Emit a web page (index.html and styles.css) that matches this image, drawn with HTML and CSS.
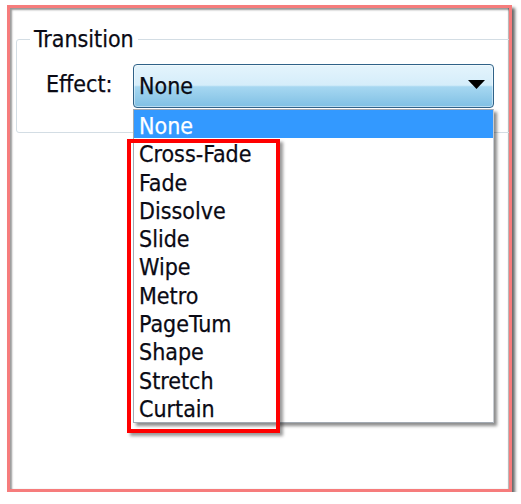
FILE: index.html
```html
<!DOCTYPE html>
<html lang="en">
<head>
<meta charset="utf-8">
<title>Transition</title>
<link rel="stylesheet" href="styles.css">
</head>
<body>
<div class="frame">
  <fieldset class="group">
    <legend class="group-title">Transition</legend>
    <div class="effect-row">
      <label class="effect-label">Effect:</label>
      <div class="combo-wrap">
        <div class="combo">
          <span class="combo-value">None</span>
          <svg class="combo-arrow" width="17" height="9" viewBox="0 0 17 9"><path d="M0 0H17L8.5 9Z" fill="#000"/></svg>
        </div>
        <div class="dropdown">
          <ul class="options">
            <li class="option selected">None</li>
            <li class="option">Cross-Fade</li>
            <li class="option">Fade</li>
            <li class="option">Dissolve</li>
            <li class="option">Slide</li>
            <li class="option">Wipe</li>
            <li class="option">Metro</li>
            <li class="option">PageTum</li>
            <li class="option">Shape</li>
            <li class="option">Stretch</li>
            <li class="option">Curtain</li>
          </ul>
          <div class="annotation"></div>
        </div>
      </div>
    </div>
  </fieldset>
</div>
</body>
</html>
```
FILE: styles.css
```css
html, body {
  margin: 0;
  padding: 0;
  background: #ffffff;
}

body {
  font-family: "DejaVu Sans Condensed", "DejaVu Sans", "Liberation Sans", sans-serif;
  font-stretch: condensed;
  font-size: 23px;
  color: #0a0a14;
  -webkit-text-stroke: 0.25px currentColor;
}

.frame {
  box-sizing: border-box;
  width: 505px;
  height: 487px;
  margin: 5px 0 0 7px;
  border: 3px solid #f67c7c;
  background: #ffffff;
  overflow: hidden;
  box-shadow: 3px 3px 3px rgba(0, 0, 0, 0.6),
              inset 2px 2px 2px rgba(0, 0, 0, 0.4),
              inset -1px 0 1px rgba(0, 0, 0, 0.3);
}

.group {
  margin: 18px -40px 0 6px;
  padding: 12px 0 24px 13px;
  border: 1px solid #d3dde4;
  border-radius: 3px;
  min-width: 0;
}

.group-title {
  padding: 0 4px;
  margin: 0;
  line-height: 26px;
  height: 26px;
}

.effect-row {
  display: grid;
  grid-template-columns: 87px 361px;
  align-items: start;
  margin-left: 16px;
}

.effect-label {
  line-height: 38px;
  margin-top: 1px;
}

.combo-wrap {
  position: relative;
  height: 44px;
}

.combo {
  box-sizing: border-box;
  height: 44px;
  display: flex;
  align-items: center;
  justify-content: space-between;
  padding: 0 8px 0 5px;
  border: 1px solid #2f6288;
  border-radius: 4px;
  background: linear-gradient(#e4f4fc 0%, #d5edfa 48%, #a6d7f1 52%, #80c0e4 100%);
  box-shadow: inset 0 0 0 1px rgba(255, 255, 255, 0.45);
}

.combo-value {
  line-height: 42px;
}

.combo-arrow {
  display: block;
  margin-top: -4px;
}

.dropdown {
  position: absolute;
  top: 100%;
  left: 0;
  width: 361px;
  margin-top: 1px;
  box-sizing: border-box;
  border: 1px solid #a3aab3;
  border-right-color: #c8ccd2;
  background: #ffffff;
  box-shadow: 3px 3px 3px rgba(0, 0, 0, 0.45);
}

.options {
  list-style: none;
  margin: 0;
  padding: 0 0 1px 0;
}

.option {
  height: 28.3px;
  line-height: 32px;
  padding-left: 5px;
  white-space: nowrap;
}

.option.selected {
  background: #3399ff;
  color: #ffffff;
}

.annotation {
  position: absolute;
  left: -7px;
  top: 29px;
  width: 153px;
  height: 294px;
  box-sizing: border-box;
  border: 4px solid #ff0000;
  box-shadow: 3px 3px 3px rgba(0, 0, 0, 0.4);
}
```
